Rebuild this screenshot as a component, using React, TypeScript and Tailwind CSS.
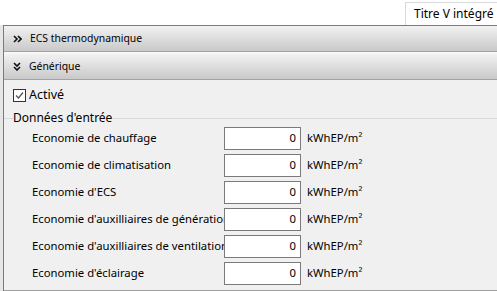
import React from 'react'

const rows = [
  'Economie de chauffage',
  'Economie de climatisation',
  "Economie d'ECS",
  "Economie d'auxilliaires de génération",
  "Economie d'auxilliaires de ventilation",
  "Economie d'éclairage",
]

function DoubleRight() {
  return (
    <svg width="9" height="8" viewBox="0 0 9 8" className="shrink-0">
      <path d="M1 1 L4 4 L1 7 M5 1 L8 4 L5 7" fill="none" stroke="#111" strokeWidth="1.6" />
    </svg>
  )
}

function DoubleDown() {
  return (
    <svg width="8" height="9" viewBox="0 0 8 9" className="shrink-0">
      <path d="M1 1 L4 4 L7 1 M1 5 L4 8 L7 5" fill="none" stroke="#111" strokeWidth="1.6" />
    </svg>
  )
}

function SectionHeader({ title, open }: { title: string; open?: boolean }) {
  return (
    <div className="h-[26px] flex items-center gap-[8px] pl-[9px] bg-gradient-to-b from-[#f2f2f2] to-[#c9c9c9] border-b border-[#a3a3a3] text-[10.4px] text-black">
      {open ? <DoubleDown /> : <DoubleRight />}
      <span>{title}</span>
    </div>
  )
}

export default function App() {
  return (
    <div className="w-[497px] h-[291px] bg-white overflow-hidden font-['Noto_Sans',sans-serif] text-[11.3px] text-black">
      {/* tab strip */}
      <div className="h-[25px] flex justify-end items-end">
        <div className="h-[23px] w-[92px] bg-white border-l border-t border-[#d9d9d9] flex items-center pl-[8px] text-[12px]">
          Titre V intégré
        </div>
      </div>

      <div className="h-[266px] border-l-[3px] border-[#e6e6e6] flex flex-col">
        <div className="flex-1 flex flex-col border-l border-t border-[#7a7a7a]">
          <SectionHeader title="ECS thermodynamique" />
          <div className="h-[2px] bg-[#f7f7f7]" />
          <SectionHeader title="Générique" open />

          <div className="flex-1 bg-[#f0f0f0] border-b border-[#a0a0a0] pt-[8px]">
            <label className="flex items-center gap-[3px] pl-[9px] h-[15px]">
              <span className="w-[13px] h-[13px] border border-[#333] bg-white flex items-center justify-center">
                <svg width="11" height="11" viewBox="0 0 11 11">
                  <path d="M2 5.5 L4.5 8 L9 2.5" fill="none" stroke="#555" strokeWidth="1.3" />
                </svg>
              </span>
              <span className="text-[12.5px]">Activé</span>
            </label>

            <fieldset className="mt-[8px] border-0 border-t border-[#dadada] pl-[9px]">
              <legend className="px-0 text-[12px] leading-[14px]">Données d'entrée</legend>
              <div className="flex flex-col gap-[4px] pt-[2px]">
                {rows.map(r => (
                  <div key={r} className="flex items-center h-[23px]">
                    <span className="w-[211px] pl-[19px] whitespace-nowrap overflow-hidden">{r}</span>
                    <div className="w-[77px] h-[23px] bg-white border border-[#7a7a7a] flex items-center justify-end pr-[4px]">
                      0
                    </div>
                    <span className="pl-[6px]">kWhEP/m²</span>
                  </div>
                ))}
              </div>
            </fieldset>
          </div>
        </div>
      </div>
    </div>
  )
}
